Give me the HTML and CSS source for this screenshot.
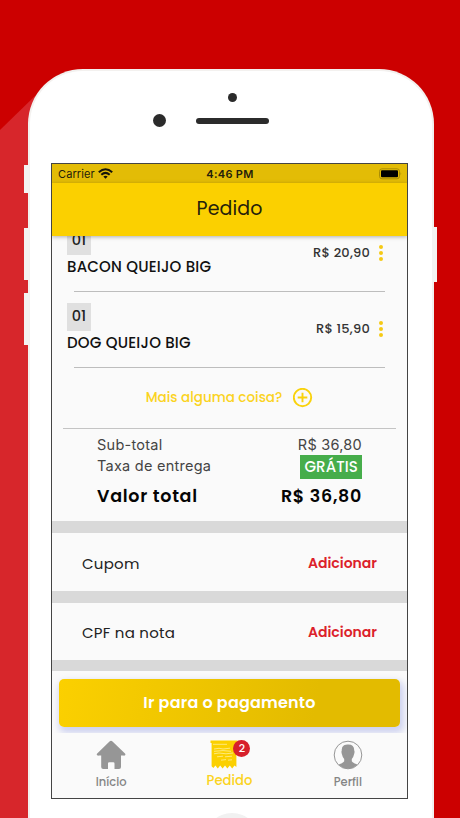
FILE: index.html
```html
<!DOCTYPE html>
<html lang="pt-BR">
<head>
  <meta charset="UTF-8" />
  <meta name="viewport" content="width=device-width, initial-scale=1" />
  <title>Pedido</title>
  <link rel="stylesheet" href="styles.css">
</head>

<body>

<svg class="phone-shadow" viewBox="0 0 60 818"><path d="M0 130 L38 93 L60 93 V818 H0 Z" fill="#d7262b"/></svg>

<div class="phone">
  <span class="side-btn mute"></span>
  <span class="side-btn vol-up"></span>
  <span class="side-btn vol-down"></span>
  <span class="side-btn power"></span>

  <div class="phone-top">
    <span class="sensor"></span>
    <div class="speaker-row">
      <span class="camera"></span>
      <span class="speaker"></span>
    </div>
  </div>

  <div class="screen">
    <div class="status-bar">
      <div class="carrier">
        <span>Carrier</span>
        <svg width="15" height="11" viewBox="0 0 15 11" fill="none" stroke="#15140a" stroke-width="2">
          <path d="M0.8 4.2 Q7.5 -1.8 14.2 4.2"/>
          <path d="M3.3 6.8 Q7.5 3 11.7 6.8"/>
          <path d="M5.3 8.5 Q7.5 6.8 9.7 8.5 L7.5 10.8 Z" fill="#15140a" stroke="none"/>
        </svg>
      </div>
      <div class="time">4:46 PM</div>
      <div class="battery">
        <svg width="23" height="12" viewBox="0 0 23 12">
          <rect x="0.5" y="0.8" width="20" height="10" rx="2.5" fill="none" stroke="#a98c05"/>
          <rect x="2" y="2.3" width="17" height="7" rx="1" fill="#000"/>
          <path d="M21.5 4 Q23 5.8 21.5 7.6 Z" fill="#a98c05"/>
        </svg>
      </div>
    </div>

    <header>Pedido</header>

    <main>
      <div class="item first">
        <div class="item-row">
          <div>
            <div class="qty">01</div>
            <div class="name">BACON QUEIJO BIG</div>
          </div>
          <div class="item-right">
            <span class="price">R$ 20,90</span>
            <span class="dots"><i></i><i></i><i></i></span>
          </div>
        </div>
        <hr>
      </div>

      <div class="item">
        <div class="item-row">
          <div>
            <div class="qty">01</div>
            <div class="name">DOG QUEIJO BIG</div>
          </div>
          <div class="item-right">
            <span class="price">R$ 15,90</span>
            <span class="dots"><i></i><i></i><i></i></span>
          </div>
        </div>
        <hr>
      </div>

      <div class="more">
        <span>Mais alguma coisa?</span>
        <svg width="20" height="20" viewBox="0 0 20 20" fill="none" stroke="#f9d20c" stroke-width="1.9">
          <circle cx="9.5" cy="9.5" r="8.7"/>
          <path d="M9.5 4.7 V14.3 M4.7 9.5 H14.3"/>
        </svg>
      </div>

      <div class="totals">
        <div class="line"><span>Sub-total</span><span>R$ 36,80</span></div>
        <div class="line"><span>Taxa de entrega</span><span class="free">GRÁTIS</span></div>
        <div class="line grand"><span>Valor total</span><span>R$ 36,80</span></div>
      </div>

      <div class="option"><span>Cupom</span><a class="add">Adicionar</a></div>
      <div class="option short"><span>CPF na nota</span><a class="add">Adicionar</a></div>
      <div class="option last"></div>
    </main>

    <div class="pay">
      <button>Ir para o pagamento</button>
    </div>

    <nav>
      <div class="tab">
        <svg width="30" height="30" viewBox="0 0 30 30" fill="#969696">
          <path d="M15 0.8 Q15.8 0.8 16.5 1.5 L29 13.5 Q29.8 14.5 29 15.3 Q28.4 16 27.4 15.6 L25 15.4 V27 Q25 29 23 29 H18.5 V23.5 Q18.5 22.3 17.3 22.3 H13.2 Q12 22.3 12 23.5 V29 H7.2 Q5.2 29 5.2 27 V15.4 L2.8 15.6 Q2 16 1.2 15.3 Q0.3 14.5 1.2 13.5 L13.5 1.5 Q14.2 0.8 15 0.8 Z"/>
        </svg>
        <span>Início</span>
      </div>
      <div class="tab active">
        <div class="receipt">
          <svg width="28" height="29" viewBox="0 0 28 29">
            <path d="M0.5 0.5 H27.5 V3 H26.4 V27 L24.5 25.5 L22.2 28.5 L19.8 25.5 L17.4 28.5 L15 25.5 L12.6 28.5 L10.2 25.5 L7.8 28.5 L5.4 25.5 L3.4 28 L1.6 26.2 V3 H0.5 Z" fill="#fbd000"/>
            <path d="M3 4.3 H17 M4 9 L9 8.3 L13 9 L20 8.2 M4 11.3 L13 10.6 L21 11.3 M4 13.8 L9 13 L16 13.8 L23 13 M7 16.8 L13 16.2 M15 16.8 L22 16.2 M11 20.2 L16 19.6 M18 20.2 L22 19.8" fill="none" stroke="#fff3b0" stroke-width="0.7"/>
          </svg>
          <span class="badge">2</span>
        </div>
        <span>Pedido</span>
      </div>
      <div class="tab">
        <svg width="30" height="30" viewBox="0 0 30 30">
          <circle cx="15" cy="15" r="13.8" fill="none" stroke="#969696" stroke-width="1"/>
          <path d="M11 5.2 Q13 4.4 15 4.5 Q21.4 4.3 21.2 10.5 Q22 11.5 21 14.5 Q20.4 17.5 18.8 19 V21.3 Q19.2 22.6 24.3 24.4 Q20.5 28.6 15 28.7 Q9.5 28.6 5.7 24.4 Q10.8 22.6 11.2 21.3 V19 Q9.6 17.5 9 14.5 Q8 11.5 8.8 10.5 Q8.4 6.5 11 5.2 Z" fill="#969696"/>
        </svg>
        <span>Perfil</span>
      </div>
    </nav>
  </div>

  <div class="phone-bottom">
    <span class="home-btn"></span>
  </div>
</div>

</body>
</html>
```
FILE: styles.css
```css
* {
  box-sizing: border-box;
}

body {
  margin: 0;
  height: 818px;
  overflow: hidden;
  background: #cc0000;
  font-family: Poppins, Inter, sans-serif;
  color: #222;
  display: flow-root;
}

.phone-shadow {
  position: absolute;
  left: 0;
  top: 0;
  width: 60px;
  height: 818px;
}

/* phone frame */
.phone {
  position: relative;
  width: 406px;
  height: 749px;
  margin: 69px 0 0 28px;
  background: #fff;
  border: 2px solid #f3f1ef;
  border-bottom: none;
  border-radius: 55px 55px 0 0;
  display: flex;
  flex-direction: column;
  align-items: center;
}

.side-btn {
  position: absolute;
  left: -6px;
  width: 5px;
  background: #f4f3f2;
}

.mute {
  top: 94px;
  height: 28px;
}

.vol-up {
  top: 157px;
  height: 52px;
}

.vol-down {
  top: 222px;
  height: 52px;
}

.power {
  left: auto;
  right: -5px;
  top: 156px;
  height: 55px;
}

.phone-top {
  width: 100%;
  height: 92px;
  padding-top: 22px;
  display: flex;
  flex-direction: column;
  align-items: center;
  flex-shrink: 0;
}

.sensor {
  width: 9px;
  height: 9px;
  margin-left: 3px;
  border-radius: 50%;
  background: #2b2b2b;
}

.speaker-row {
  display: flex;
  align-items: center;
  gap: 30px;
  margin-top: 12px;
  width: 280px;
  padding-left: 62px;
}

.camera {
  width: 13px;
  height: 13px;
  border-radius: 50%;
  background: #2b2b2b;
}

.speaker {
  width: 73px;
  height: 6px;
  margin-top: 1px;
  border-radius: 3px;
  background: #2b2b2b;
}

.screen {
  width: 357px;
  height: 636px;
  margin-right: 3px;
  border: 1px solid #444;
  background: #fafafa;
  display: flex;
  flex-direction: column;
  flex-shrink: 0;
  overflow: hidden;
}

.status-bar {
  height: 19px;
  background: #e3bc06;
  display: grid;
  grid-template-columns: 1fr 1fr 1fr;
  align-items: center;
  padding: 0 5px 0 6px;
  font-family: Inter, sans-serif;
  font-size: 11px;
  color: #24200a;
  flex-shrink: 0;
}

.carrier {
  display: flex;
  align-items: center;
  gap: 3px;
  letter-spacing: 0.1px;
}

.time {
  text-align: center;
  font-weight: 600;
  letter-spacing: 0.3px;
}

.battery {
  display: flex;
  justify-content: flex-end;
}

header {
  height: 53px;
  background: #fbd000;
  color: #25210b;
  font-size: 19px;
  letter-spacing: 0.1px;
  line-height: 51px;
  text-align: center;
  box-shadow: 0 1px 4px rgba(0,0,0,0.3);
  position: relative;
  z-index: 1;
  flex-shrink: 0;
}

main {
  height: 435px;
  overflow: hidden;
  flex-shrink: 0;
}

/* order items */
.item {
  height: 76px;
  padding: 0 22px 0 15px;
}

.item.first {
  margin-top: -9px;
}

.item-row {
  height: 52px;
  display: flex;
  align-items: center;
  justify-content: space-between;
}

.qty {
  width: 24px;
  height: 28px;
  background: #e0e0e0;
  font-size: 14.5px;
  font-weight: 500;
  line-height: 27px;
  text-align: center;
}

.name {
  height: 24px;
  font-size: 15px;
  font-weight: 500;
  letter-spacing: 0.2px;
  line-height: 24px;
  color: #111;
  white-space: nowrap;
}

.item-right {
  display: flex;
  align-items: center;
  gap: 9px;
}

.price {
  font-size: 13px;
  font-weight: 500;
  letter-spacing: 0.2px;
  color: #333;
}

.dots {
  display: flex;
  flex-direction: column;
  gap: 2px;
  width: 6px;
}

.dots i {
  width: 4px;
  height: 4px;
  border-radius: 50%;
  background: #f5c915;
}

.item hr {
  height: 1px;
  margin: 12px 0 0 7px;
  border: 0;
  background: #bdbdbd;
}

.more {
  height: 50px;
  margin: 0 11px;
  padding-top: 9px;
  display: flex;
  align-items: flex-start;
  justify-content: center;
  gap: 11px;
  border-bottom: 1px solid #c4c4c4;
  font-size: 13.5px;
  font-weight: 500;
  line-height: 20px;
  color: #fbd321;
}

/* totals */
.totals {
  height: 92px;
  padding: 5px 45px 0 45px;
}

.line {
  height: 21px;
  display: flex;
  align-items: center;
  justify-content: space-between;
  font-family: Inter, sans-serif;
  font-size: 14.5px;
  letter-spacing: 0.25px;
  color: #444;
}

.free {
  height: 24px;
  margin-top: 2px;
  padding: 0 4px;
  background: #46ad4b;
  color: #fff;
  font-family: Poppins, Inter, sans-serif;
  font-size: 15px;
  font-weight: 500;
  letter-spacing: 0.1px;
  line-height: 24px;
}

.line.grand {
  height: 39px;
  font-family: Poppins, Inter, sans-serif;
  font-size: 17.5px;
  font-weight: 600;
  letter-spacing: 0.7px;
  color: #050505;
}

.option {
  height: 70px;
  border-top: 12px solid #d9d9d9;
  padding: 2px 30px 0 30px;
  display: flex;
  align-items: center;
  justify-content: space-between;
  font-size: 15px;
  letter-spacing: 0.25px;
}

.option.short {
  height: 69px;
}

.option.last {
  height: 12px;
  padding: 0;
}

.add {
  color: #dc1f2b;
  font-size: 14px;
  font-weight: 600;
  letter-spacing: 0;
}

.pay {
  height: 62px;
  padding: 8px 7px 6px 7px;
  flex-shrink: 0;
  overflow: hidden;
}

.pay button {
  display: block;
  width: 341px;
  height: 48px;
  padding: 0 0 2px;
  border: none;
  border-radius: 5px;
  background: linear-gradient(100deg, #fbd000, #e3bb00 75%);
  box-shadow: 2px 4px 7px 2px rgba(140,150,225,0.4);
  color: #fff;
  font-family: inherit;
  font-size: 16px;
  font-weight: 600;
  letter-spacing: 0.2px;
}

/* bottom tabs */
nav {
  height: 65px;
  display: grid;
  grid-template-columns: 1fr 1fr 1fr;
  flex-shrink: 0;
}

.tab {
  display: flex;
  flex-direction: column;
  align-items: center;
  padding-top: 7px;
  font-size: 11.5px;
  font-weight: 500;
  line-height: 25px;
  color: #858585;
}

.tab.active {
  color: #fbd321;
  font-size: 13.2px;
  line-height: 22px;
}

.receipt {
  position: relative;
  height: 30px;
  margin-right: 10px;
}

.receipt svg {
  display: block;
}

.badge {
  position: absolute;
  left: 23px;
  top: 0;
  width: 17px;
  height: 17px;
  border-radius: 50%;
  background: #d7202b;
  color: #fff;
  font-size: 11px;
  line-height: 17px;
  text-align: center;
}

.phone-bottom {
  width: 100%;
  flex: 1;
  min-height: 0;
  padding: 14px 0 0 2px;
  display: flex;
  justify-content: center;
  overflow: hidden;
}

.home-btn {
  width: 54px;
  height: 54px;
  border-radius: 50%;
  background: #f1f1f1;
  flex-shrink: 0;
}
```
